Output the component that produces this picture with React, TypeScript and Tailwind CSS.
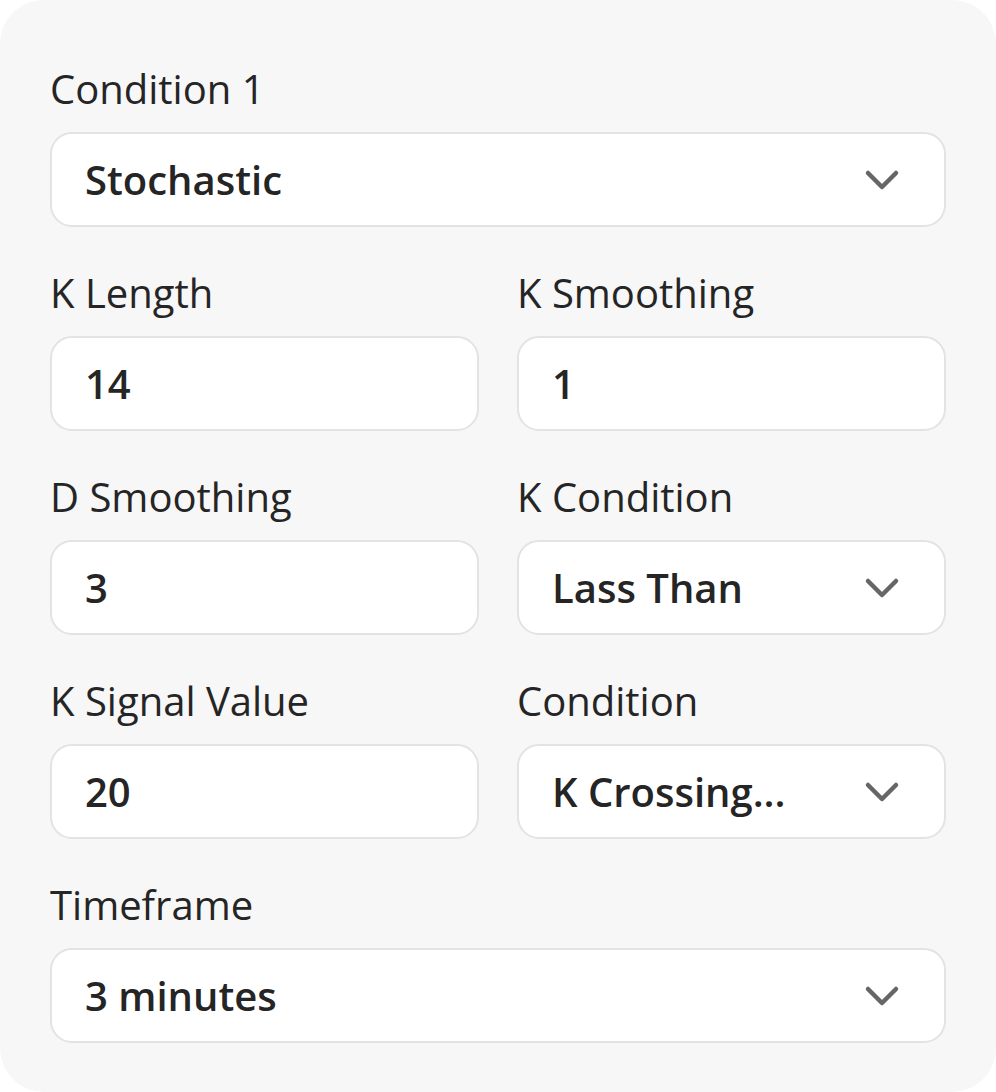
import React from "react";

type Field = {
  label: string;
  value: string;
  select?: boolean;
};

const Chevron = () => (
  <svg width="32" height="18" viewBox="0 0 32 18" fill="none" className="overflow-visible shrink-0">
    <polyline
      points="2,2 16,16 30,2"
      stroke="#666666"
      strokeWidth="4.5"
      strokeLinecap="round"
      strokeLinejoin="round"
    />
  </svg>
);

const FieldBox = ({ label, value, select }: Field) => (
  <div className="flex flex-col min-w-0">
    <label className="text-[40px] leading-[48px] text-[#252525] mb-[19px] whitespace-nowrap">{label}</label>
    <div className="h-[95px] flex items-center justify-between bg-white border-2 border-[#e3e3e3] rounded-[22px] pl-[33px] pr-[46px]">
      <span className="text-[40px] font-semibold text-[#252525] whitespace-nowrap">{value}</span>
      {select && <Chevron />}
    </div>
  </div>
);

export default function App() {
  return (
    <div className="w-[996px] h-[1092px] bg-white" style={{ fontFamily: '"Open Sans", "Noto Sans", sans-serif' }}>
      <div className="h-full bg-[#f7f7f7] rounded-[44px] px-[50px] pt-[65px] pb-[48px] flex flex-col gap-[42px]">
        <FieldBox label="Condition 1" value="Stochastic" select />
        <div className="grid grid-cols-2 gap-x-[38px]">
          <FieldBox label="K Length" value="14" />
          <FieldBox label="K Smoothing" value="1" />
        </div>
        <div className="grid grid-cols-2 gap-x-[38px]">
          <FieldBox label="D Smoothing" value="3" />
          <FieldBox label="K Condition" value="Lass Than" select />
        </div>
        <div className="grid grid-cols-2 gap-x-[38px]">
          <FieldBox label="K Signal Value" value="20" />
          <FieldBox label="Condition" value="K Crossing..." select />
        </div>
        <FieldBox label="Timeframe" value="3 minutes" select />
      </div>
    </div>
  );
}
